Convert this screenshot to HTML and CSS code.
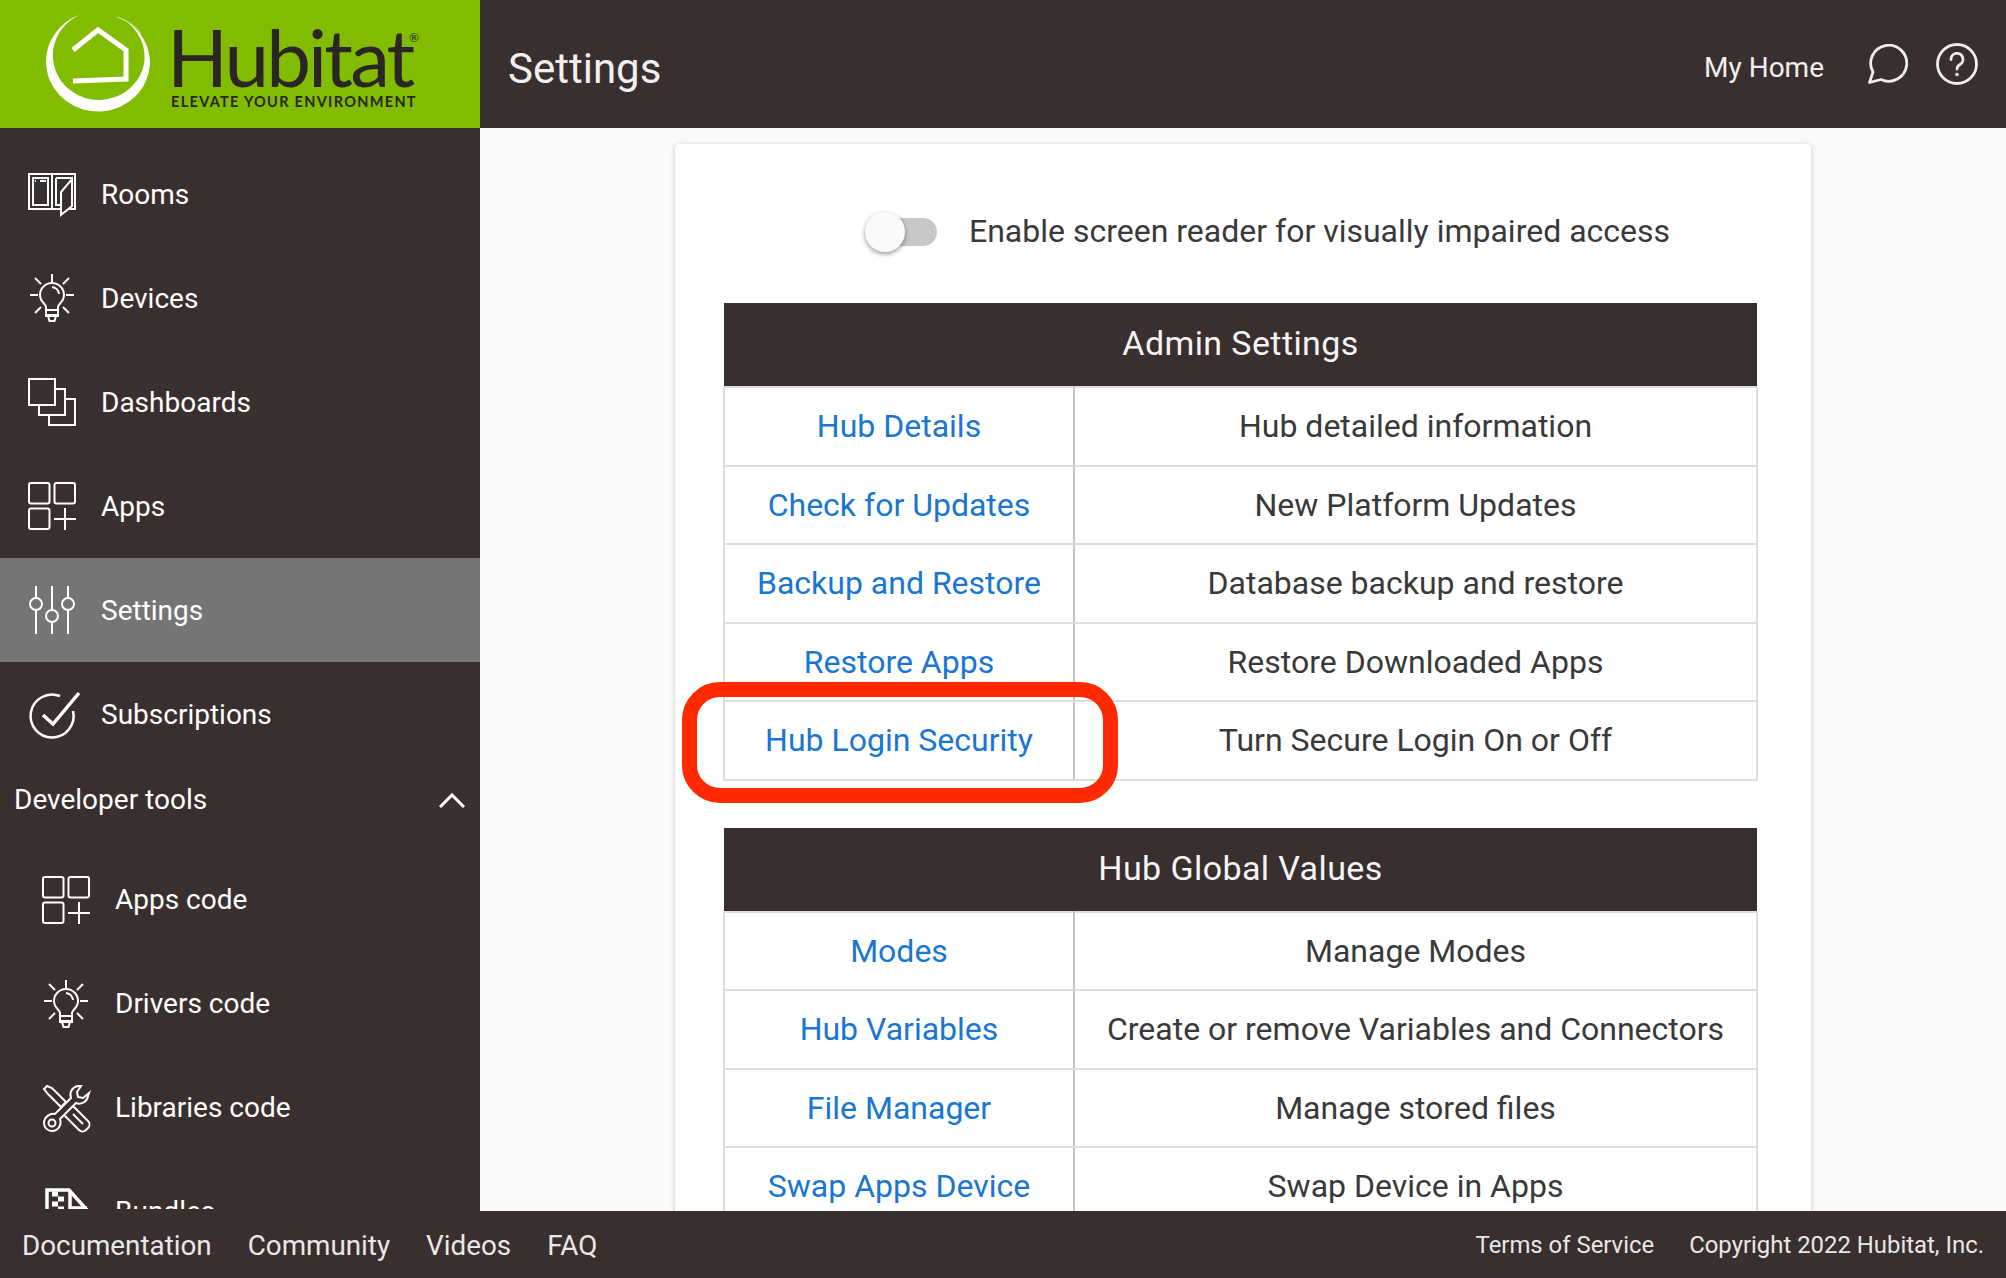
FILE: index.html
```html
<!DOCTYPE html>
<html lang="en">
<head>
<meta charset="utf-8">
<title>Hubitat Settings</title>
<link rel="stylesheet" href="styles.css">
</head>
<body>
<svg class="sprite" aria-hidden="true">
  <symbol id="i-apps" viewBox="0 0 48 48">
    <rect x="1" y="1" width="20.5" height="20.5" rx="2"/>
    <rect x="26.5" y="1" width="20.5" height="20.5" rx="2"/>
    <rect x="1" y="26.5" width="20.5" height="20.5" rx="2"/>
    <path d="M26 37h22M37 26v22"/>
  </symbol>
  <symbol id="i-bulb" viewBox="0 0 48 48">
    <path d="M24 0v8M2 21h8M38 21h8M7 4l6 6M41 4l-6 6M7 39l6-6M41 39l-6-6"/>
    <path d="M18 36v-3c0-3-6-5-6-12a12 12 0 0 1 24 0c0 7-6 9-6 12v3z"/>
    <path d="M24 13a8 8 0 0 1 7 7"/>
    <path d="M18 36v6h12v-6M18 41h12M20 42l1.500 5h5l1.500-5"/>
  </symbol>
</svg>

<header class="topbar">
  <a class="logo" href="#">
    <svg class="logo-mark" viewBox="0 0 130 128" aria-hidden="true">
      <path class="logo-fill" d="M37 14A52 50 0 1 0 105 64A52 50 0 0 0 79 20A46 44.500 0 0 1 99 64A46 44.500 0 1 1 37 14Z"/>
      <path class="logo-hair" d="M72 17Q88 22 96 34"/>
      <path class="logo-house" d="M28 50L53 30L81 50V79L28 81"/>
    </svg>
    <span class="logo-text">
      <span class="logo-name">Hubitat<sup class="logo-reg">®</sup></span>
      <span class="logo-tag">ELEVATE YOUR ENVIRONMENT</span>
    </span>
  </a>
  <h1 class="page-title">Settings</h1>
  <div class="top-actions">
    <span class="hub-name">My Home</span>
    <svg class="top-icon chat" viewBox="0 0 40 40" aria-hidden="true"><path d="M1.500 38.500L5 28A18 18 0 1 1 13 35.500Z"/></svg>
    <svg class="top-icon help" viewBox="0 0 42 42" aria-hidden="true"><circle cx="21" cy="21" r="19.500"/><path d="M15 16.500a6 6 0 1 1 9 5c-2 1.200-3 2.300-3 4.500"/><circle class="dot" cx="21" cy="31.500" r="1.800"/></svg>
  </div>
</header>

<div class="middle">
  <nav class="sidebar">
    <a class="nav-item" href="#">
      <svg class="icon" viewBox="0 0 48 48" aria-hidden="true">
        <path d="M1 4h46v35H1zM24 4v35"/>
        <path d="M5 8h15v27H5zM28 8h16v27H38"/>
        <path d="M28 8v27h4"/>
        <path class="filled" d="M33 45V22L44 9v27z"/>
        <path d="M7 11h1M12 11h6"/>
      </svg>
      <span>Rooms</span>
    </a>
    <a class="nav-item" href="#"><svg class="icon" aria-hidden="true"><use href="#i-bulb"/></svg><span>Devices</span></a>
    <a class="nav-item" href="#">
      <svg class="icon" viewBox="0 0 48 48" aria-hidden="true">
        <rect x="1" y="1" width="26" height="26"/>
        <path d="M27 11h10v26H11V27"/>
        <path d="M37 21h10v26H21V37"/>
      </svg>
      <span>Dashboards</span>
    </a>
    <a class="nav-item" href="#"><svg class="icon" aria-hidden="true"><use href="#i-apps"/></svg><span>Apps</span></a>
    <a class="nav-item active" href="#">
      <svg class="icon" viewBox="0 0 48 48" aria-hidden="true">
        <path d="M8 0v12M8 24v24M24 0v24M24 36v12M40 0v12M40 24v24"/>
        <circle cx="8" cy="18" r="6"/><circle cx="24" cy="30" r="6"/><circle cx="40" cy="18" r="6"/>
      </svg>
      <span>Settings</span>
    </a>
    <a class="nav-item" href="#">
      <svg class="icon" viewBox="0 0 48 48" aria-hidden="true">
        <path class="mid" d="M32 6A21.500 21.500 0 1 0 45 21"/>
        <path class="thick" d="M15 25l10 9L51 3"/>
      </svg>
      <span>Subscriptions</span>
    </a>
    <div class="nav-group">
      <span>Developer tools</span>
      <svg class="chevron" viewBox="0 0 26 15" aria-hidden="true"><path d="M1 14L13 2l12 12"/></svg>
    </div>
    <a class="nav-item sub" href="#"><svg class="icon" aria-hidden="true"><use href="#i-apps"/></svg><span>Apps code</span></a>
    <a class="nav-item sub" href="#"><svg class="icon" aria-hidden="true"><use href="#i-bulb"/></svg><span>Drivers code</span></a>
    <a class="nav-item sub" href="#">
      <svg class="icon" viewBox="0 0 48 48" aria-hidden="true">
        <path d="M2 5L5 2l5 2 14 14-5 5L6 10z"/>
        <path d="M26 25l4-4 16 16c2 2 2 5 0 7l-2 2c-2 2-5 2-7 0L21 30z"/>
        <path d="M31 30l10 10"/>
        <path class="filled" d="M36 2c-6 1-9 7-7 12L13 30c-5-1-11 3-11 9 0 5 4 8 8 8 6 0 10-6 8-12l16-16c5 2 11-1 12-7l1-3-6 5-5-1-1-5 4-6z"/>
        <circle cx="10" cy="39" r="3.500"/>
      </svg>
      <span>Libraries code</span>
    </a>
    <a class="nav-item sub" href="#">
      <svg class="icon" viewBox="0 0 48 48" aria-hidden="true">
        <path class="thick" d="M5 48V2h22l18 20v26"/>
        <path class="thick" d="M28 2v18h17"/>
        <path class="zip" d="M10 6h6M16 11h6M10 16h6M16 21h6M10 26h6"/>
      </svg>
      <span>Bundles</span>
    </a>
  </nav>

  <main class="content">
    <section class="card">
      <div class="reader-row">
        <span class="switch"><span class="track"></span><span class="thumb"></span></span>
        <span class="reader-label">Enable screen reader for visually impaired access</span>
      </div>

      <table class="settings">
        <colgroup><col class="col-link"><col></colgroup>
        <thead><tr><th colspan="2">Admin Settings</th></tr></thead>
        <tbody>
          <tr><td><a href="#">Hub Details</a></td><td>Hub detailed information</td></tr>
          <tr><td><a href="#">Check for Updates</a></td><td>New Platform Updates</td></tr>
          <tr><td><a href="#">Backup and Restore</a></td><td>Database backup and restore</td></tr>
          <tr><td><a href="#">Restore Apps</a></td><td>Restore Downloaded Apps</td></tr>
          <tr><td><a href="#">Hub Login Security</a></td><td>Turn Secure Login On or Off</td></tr>
        </tbody>
      </table>

      <table class="settings">
        <colgroup><col class="col-link"><col></colgroup>
        <thead><tr><th colspan="2">Hub Global Values</th></tr></thead>
        <tbody>
          <tr><td><a href="#">Modes</a></td><td>Manage Modes</td></tr>
          <tr><td><a href="#">Hub Variables</a></td><td>Create or remove Variables and Connectors</td></tr>
          <tr><td><a href="#">File Manager</a></td><td>Manage stored files</td></tr>
          <tr><td><a href="#">Swap Apps Device</a></td><td>Swap Device in Apps</td></tr>
        </tbody>
      </table>

      <div class="callout"></div>
    </section>
  </main>
</div>

<footer class="footer">
  <div class="foot-links">
    <a href="#">Documentation</a>
    <a href="#">Community</a>
    <a href="#">Videos</a>
    <a href="#">FAQ</a>
  </div>
  <div class="foot-legal">
    <a href="#">Terms of Service</a>
    <span>Copyright 2022 Hubitat, Inc.</span>
  </div>
</footer>
</body>
</html>
```

FILE: styles.css
```css
* { box-sizing: border-box; }
html, body { height: 100%; }
body {
  margin: 0;
  height: 100vh;
  display: flex;
  flex-direction: column;
  overflow: hidden;
  background: #fafafa;
  font-family: Roboto, "Liberation Sans", sans-serif;
  color: #393939;
}
a { color: inherit; text-decoration: none; }
.sprite { display: none; }

/* top bar */
.topbar {
  flex: 0 0 128px;
  display: flex;
  align-items: center;
  background: #392f2e;
  color: #f0f0f0;
}
.logo {
  flex: 0 0 480px;
  height: 128px;
  display: flex;
  background: #81bc00;
  padding-left: 45px;
}
.logo-mark { flex: 0 0 130px; width: 130px; height: 128px; }
.logo-fill { fill: #fff; }
.logo-hair { fill: none; stroke: #fff; stroke-width: 1.2; opacity: .6; }
.logo-house { fill: none; stroke: #fff; stroke-width: 5; }
.logo-text {
  display: flex;
  flex-direction: column;
  margin-left: -11px;
  color: #2b2523;
}
.logo-name {
  position: relative;
  font-family: Lato, sans-serif;
  font-size: 80px;
  line-height: 80px;
  margin: 16px 0 0 3px;
  letter-spacing: -2.900px;
}
.logo-reg {
  position: absolute;
  top: 16px;
  left: 242px;
  font-size: 12px;
  line-height: 12px;
  letter-spacing: 0;
}
.logo-tag {
  font-family: Lato, sans-serif;
  font-weight: 700;
  font-size: 14.500px;
  line-height: 16px;
  margin: -2px 0 0 7px;
  letter-spacing: 1.310px;
  white-space: nowrap;
}
.page-title {
  margin: 8px 0 0 28px;
  font-size: 42px;
  font-weight: 400;
}
.top-actions {
  margin-left: auto;
  display: flex;
  align-items: center;
  padding-right: 28px;
}
.hub-name { font-size: 28px; margin-top: 7px; }
.top-icon { fill: none; stroke: #eee; stroke-width: 2.800; stroke-linejoin: round; stroke-linecap: round; }
.chat { width: 40px; height: 40px; margin-left: 44px; }
.help { width: 42px; height: 42px; margin-left: 28px; }
.dot { fill: #eee; stroke: none; }

/* middle */
.middle { flex: 1; display: flex; min-height: 0; }

.sidebar {
  flex: 0 0 480px;
  padding-top: 14px;
  overflow: hidden;
  background: #392f2e;
  border-bottom: 2px solid #392f2e;
  color: #fff;
  font-size: 28px;
}
.nav-item {
  height: 104px;
  display: flex;
  align-items: center;
  gap: 25px;
  padding-left: 28px;
}
.nav-item.sub { padding-left: 42px; }
.nav-item.sub span { margin-bottom: 2px; }
.nav-item.active { background: #757575; }
.icon {
  flex: 0 0 48px;
  width: 48px;
  height: 48px;
  fill: none;
  stroke: #fff;
  stroke-width: 2;
  overflow: visible;
}
.icon .filled { fill: #392f2e; }
.icon .mid { stroke-width: 2.500; }
.icon .thick { stroke-width: 3.500; }
.icon .zip { stroke-width: 5; }
.nav-group {
  height: 68px;
  margin-bottom: 14px;
  display: flex;
  align-items: center;
  justify-content: space-between;
  padding: 0 15px 0 14px;
}
.nav-group span { margin-bottom: 2px; }
.chevron { width: 26px; height: 15px; fill: none; stroke: #fff; stroke-width: 3; }

/* content */
.content { flex: 1; min-width: 0; overflow: hidden; background: #fafafa; }
.card {
  position: relative;
  width: 1136px;
  margin: 16px auto 0;
  padding: 48px 53px 48px 48px;
  background: #fff;
  border-radius: 4px;
  box-shadow: 0 1px 5px rgba(0, 0, 0, .22);
}
.reader-row {
  height: 80px;
  margin-bottom: 31px;
  display: flex;
  align-items: center;
  padding-left: 142px;
}
.switch { position: relative; display: block; width: 72px; height: 40px; }
.track {
  position: absolute;
  top: 6px;
  left: 14px;
  width: 58px;
  height: 28px;
  border-radius: 14px;
  background: #c8c8c8;
}
.thumb {
  position: absolute;
  top: 0;
  left: 0;
  width: 40px;
  height: 40px;
  border-radius: 50%;
  background: #fafafa;
  box-shadow: 0 2px 5px rgba(0, 0, 0, .4);
}
.reader-label { margin-left: 32px; margin-bottom: 2px; font-size: 32px; white-space: nowrap; }

.settings {
  width: 1035px;
  margin-bottom: 47px;
  border-collapse: collapse;
  table-layout: fixed;
  font-size: 32px;
}
.col-link { width: 350px; }
.settings th {
  height: 84px;
  padding-bottom: 4px;
  background: #392f2e;
  color: #f4f4f4;
  font-size: 34px;
  font-weight: 400;
  letter-spacing: .4px;
  border: 0;
}
.settings td {
  height: 78.500px;
  padding: 0;
  text-align: center;
  border: 2px solid #ddd;
}
.settings td:first-child { border-right: 2px solid #c4c4c4; }
.settings td a { color: #1976d2; }

.callout {
  position: absolute;
  left: 7px;
  top: 538px;
  width: 436px;
  height: 121px;
  border: 15px solid #ff2a00;
  border-radius: 38px;
}

/* footer */
.footer {
  flex: 0 0 67px;
  display: flex;
  align-items: center;
  justify-content: space-between;
  padding: 0 22px;
  background: #392f2e;
  color: #e8e8e8;
}
.foot-links { display: flex; gap: 36px; margin-top: 2px; font-size: 27.800px; }
.foot-legal { display: flex; gap: 35px; font-size: 23.900px; }
```
